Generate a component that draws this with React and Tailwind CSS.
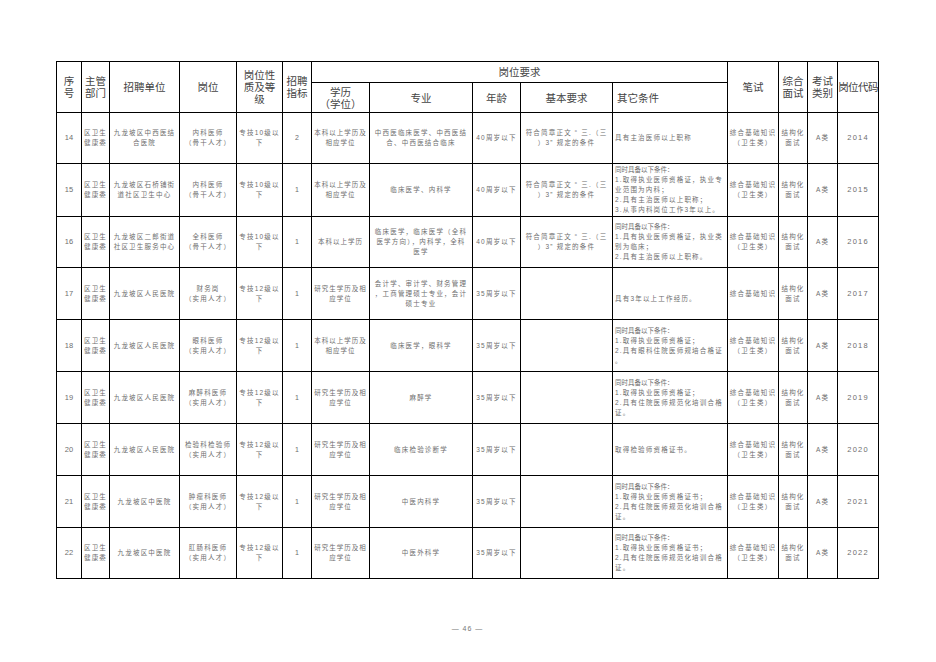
import React from "react";

const cols = [25, 28, 70, 57, 46, 29, 58, 103, 48, 92, 115, 51, 29, 30, 41];

const basicReq = ["符合简章正文 “ 三.（三", "）3” 规定的条件"];
const exam = ["综合基础知识", "（卫生类）"];

const rows = [
  {
    h: "h-[51px]",
    no: "14",
    unit: ["九龙坡区中西医结", "合医院"],
    post: ["内科医师", "（骨干人才）"],
    level: "10",
    count: "2",
    edu: ["本科以上学历及", "相应学位"],
    major: ["中西医临床医学、中西医结", "合、中西医结合临床"],
    age: "40周岁以下",
    basic: basicReq,
    other: ["具有主治医师以上职称"],
    otherCls: "leading-[8px] tracking-[0px]",
    written: exam,
    code: "2014",
  },
  {
    h: "h-[53px]",
    no: "15",
    unit: ["九龙坡区石桥铺街", "道社区卫生中心"],
    post: ["内科医师", "（骨干人才）"],
    level: "10",
    count: "1",
    edu: ["本科以上学历及", "相应学位"],
    major: ["临床医学、内科学"],
    age: "40周岁以下",
    basic: basicReq,
    other: [
      "同时具备以下条件：",
      "1.取得执业医师资格证，执业专",
      "业范围为内科；",
      "2.具有主治医师以上职称；",
      "3.从事内科岗位工作3年以上。",
    ],
    otherCls: "leading-[7.6px]",
    written: exam,
    code: "2015",
  },
  {
    h: "h-[51px]",
    no: "16",
    unit: ["九龙坡区二郎街道", "社区卫生服务中心"],
    post: ["全科医师", "（骨干人才）"],
    level: "10",
    count: "1",
    edu: ["本科以上学历"],
    major: ["临床医学，临床医学（全科", "医学方向），内科学，全科", "医学"],
    age: "40周岁以下",
    basic: basicReq,
    other: [
      "同时具备以下条件：",
      "1.具有执业医师资格证，执业类",
      "别为临床；",
      "2.具有主治医师以上职称。",
    ],
    otherCls: "leading-[8.2px]",
    written: exam,
    code: "2016",
  },
  {
    h: "h-[52px]",
    no: "17",
    unit: ["九龙坡区人民医院"],
    post: ["财务岗", "（实用人才）"],
    level: "12",
    count: "1",
    edu: ["研究生学历及相", "应学位"],
    major: ["会计学、审计学、财务管理", "，工商管理硕士专业，会计", "硕士专业"],
    age: "35周岁以下",
    basic: [],
    other: ["", "具有3年以上工作经历。"],
    otherCls: "leading-[9px]",
    written: ["综合基础知识"],
    code: "2017",
  },
  {
    h: "h-[52px]",
    no: "18",
    unit: ["九龙坡区人民医院"],
    post: ["眼科医师", "（实用人才）"],
    level: "12",
    count: "1",
    edu: ["本科以上学历及", "相应学位"],
    major: ["临床医学，眼科学"],
    age: "35周岁以下",
    basic: [],
    other: [
      "同时具备以下条件：",
      "1.取得执业医师资格证；",
      "2.具有眼科住院医师规培合格证",
      "。",
    ],
    otherCls: "leading-[9.4px]",
    written: exam,
    code: "2018",
  },
  {
    h: "h-[52px]",
    no: "19",
    unit: ["九龙坡区人民医院"],
    post: ["麻醉科医师", "（实用人才）"],
    level: "12",
    count: "1",
    edu: ["研究生学历及相", "应学位"],
    major: ["麻醉学"],
    age: "35周岁以下",
    basic: [],
    other: [
      "同时具备以下条件：",
      "1.取得执业医师资格证；",
      "2.具有住院医师规范化培训合格",
      "证。",
    ],
    otherCls: "leading-[9.3px]",
    written: exam,
    code: "2019",
  },
  {
    h: "h-[52px]",
    no: "20",
    unit: ["九龙坡区人民医院"],
    post: ["检验科检验师", "（实用人才）"],
    level: "12",
    count: "1",
    edu: ["研究生学历及相", "应学位"],
    major: ["临床检验诊断学"],
    age: "35周岁以下",
    basic: [],
    other: ["取得检验师资格证书。"],
    otherCls: "leading-[9px]",
    written: exam,
    code: "2020",
  },
  {
    h: "h-[52px]",
    no: "21",
    unit: ["九龙坡区中医院"],
    post: ["肿瘤科医师", "（实用人才）"],
    level: "12",
    count: "1",
    edu: ["研究生学历及相", "应学位"],
    major: ["中医内科学"],
    age: "35周岁以下",
    basic: [],
    other: [
      "同时具备以下条件：",
      "1.取得执业医师资格证书；",
      "2.具有住院医师规范化培训合格",
      "证。",
    ],
    otherCls: "leading-[8.4px]",
    written: exam,
    code: "2021",
  },
  {
    h: "h-[51px]",
    no: "22",
    unit: ["九龙坡区中医院"],
    post: ["肛肠科医师", "（实用人才）"],
    level: "12",
    count: "1",
    edu: ["研究生学历及相", "应学位"],
    major: ["中医外科学"],
    age: "35周岁以下",
    basic: [],
    other: [
      "同时具备以下条件：",
      "1.取得执业医师资格证书；",
      "2.具有住院医师规范化培训合格",
      "证。",
    ],
    otherCls: "leading-[8.4px]",
    written: exam,
    code: "2022",
  },
];

function Lines({ lines }) {
  return lines.map((l, i) => (
    <div key={i} className="whitespace-nowrap">
      {l}
    </div>
  ));
}

function Th({ children, className = "", ...rest }) {
  return (
    <th
      {...rest}
      className={`border border-black p-0 font-normal text-[10.5px] leading-[12px] text-[#444] text-center align-middle ${className}`}
    >
      {children}
    </th>
  );
}

function Td({ children, className = "" }) {
  return (
    <td
      className={`border border-black p-0 text-center align-middle text-[6.5px] leading-[10px] tracking-[1.2px] text-[#6e6e6e] ${className}`}
    >
      {children}
    </td>
  );
}

export default function App() {
  return (
    <div
      className="w-[936px] h-[662px] bg-white overflow-hidden"
      style={{ fontFamily: '"Liberation Sans", "Noto Sans CJK SC", sans-serif' }}
    >
      <div className="pt-[61px] pl-[56px]">
        <table className="border-collapse table-fixed w-[823px]">
          <colgroup>
            {cols.map((w, i) => (
              <col key={i} style={{ width: w }} />
            ))}
          </colgroup>
          <thead>
            <tr className="h-[21px]">
              <Th rowSpan={2}>序<br />号</Th>
              <Th rowSpan={2}>主管<br />部门</Th>
              <Th rowSpan={2}>招聘单位</Th>
              <Th rowSpan={2}>岗位</Th>
              <Th rowSpan={2}>岗位性<br />质及等<br />级</Th>
              <Th rowSpan={2}>招聘<br />指标</Th>
              <Th colSpan={5}>岗位要求</Th>
              <Th rowSpan={2}>笔试</Th>
              <Th rowSpan={2}>综合<br />面试</Th>
              <Th rowSpan={2}>考试<br />类别</Th>
              <Th rowSpan={2} className="whitespace-nowrap tracking-[-0.6px]">岗位代码</Th>
            </tr>
            <tr className="h-[30px]">
              <Th className="leading-[11.5px]">学历<br />（学位）</Th>
              <Th>专业</Th>
              <Th>年龄</Th>
              <Th>基本要求</Th>
              <Th className="text-left pl-[4px]">其它条件</Th>
            </tr>
          </thead>
          <tbody>
            {rows.map((r) => (
              <tr key={r.no} className={r.h}>
                <Td className="text-[7.5px] tracking-normal">{r.no}</Td>
                <Td className="tracking-[0.6px]">
                  <Lines lines={["区卫生", "健康委"]} />
                </Td>
                <Td>
                  <Lines lines={r.unit} />
                </Td>
                <Td className="tracking-[0.5px]">
                  <Lines lines={r.post} />
                </Td>
                <Td className="tracking-[0.6px]">
                  <Lines lines={[`专技${r.level}级以`, "下"]} />
                </Td>
                <Td className="text-[7px] tracking-normal">{r.count}</Td>
                <Td className="tracking-[1px]">
                  <Lines lines={r.edu} />
                </Td>
                <Td>
                  <Lines lines={r.major} />
                </Td>
                <Td className="tracking-[0.7px]">{r.age}</Td>
                <Td className="tracking-[0.9px]">
                  <Lines lines={r.basic} />
                </Td>
                <Td className={`text-left pl-[2px] tracking-[0.8px] ${r.otherCls}`}>
                  {r.other.map((l, i) => (
                    <div
                      key={i}
                      className={`whitespace-nowrap ${
                        l === "同时具备以下条件：" ? "tracking-[0px]" : ""
                      }`}
                    >
                      {l || "\u00a0"}
                    </div>
                  ))}
                </Td>
                <Td className="tracking-[1.3px]">
                  <Lines lines={r.written} />
                </Td>
                <Td className="tracking-[0.3px]">
                  <Lines lines={["结构化", "面试"]} />
                </Td>
                <Td className="tracking-[0.3px]">A类</Td>
                <Td className="text-[7.5px] tracking-[0.5px]">{r.code}</Td>
              </tr>
            ))}
          </tbody>
        </table>
        <div className="w-[823px] mt-[45px] text-center text-[7px] text-[#777] tracking-[1px]">
          — 46 —
        </div>
      </div>
    </div>
  );
}
